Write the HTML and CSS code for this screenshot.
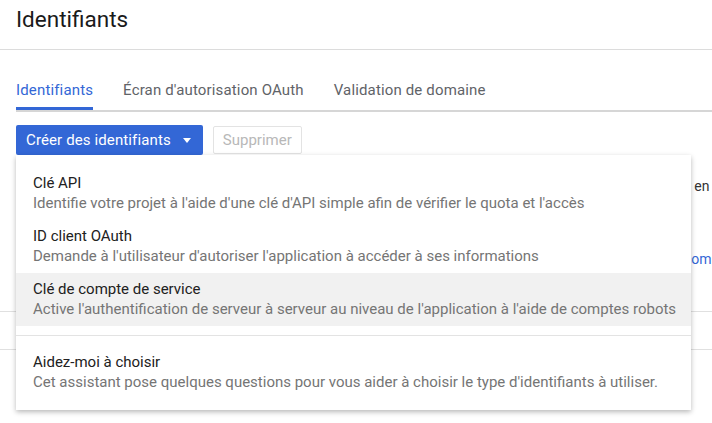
FILE: index.html
```html
<!DOCTYPE html>
<html lang="fr">
<head>
<meta charset="utf-8">
<title>Identifiants</title>
<link rel="stylesheet" href="styles.css">
</head>
<body>
<div class="page">
  <header class="header">
    <h1 class="title">Identifiants</h1>
  </header>
  <nav class="tabs">
    <div class="tab tab-active">Identifiants</div>
    <div class="tab">Écran d'autorisation OAuth</div>
    <div class="tab">Validation de domaine</div>
  </nav>
  <div class="actions">
    <div class="create-wrap">
      <button class="btn-primary">Créer des identifiants <span class="caret"></span></button>
      <div class="menu">
        <div class="item">
          <div class="item-title">Clé API</div>
          <div class="item-desc">Identifie votre projet à l'aide d'une clé d'API simple afin de vérifier le quota et l'accès</div>
        </div>
        <div class="item">
          <div class="item-title">ID client OAuth</div>
          <div class="item-desc">Demande à l'utilisateur d'autoriser l'application à accéder à ses informations</div>
        </div>
        <div class="item item-hover">
          <div class="item-title">Clé de compte de service</div>
          <div class="item-desc">Active l'authentification de serveur à serveur au niveau de l'application à l'aide de comptes robots</div>
        </div>
        <div class="divider"></div>
        <div class="item">
          <div class="item-title">Aidez-moi à choisir</div>
          <div class="item-desc">Cet assistant pose quelques questions pour vous aider à choisir le type d'identifiants à utiliser.</div>
        </div>
      </div>
    </div>
    <button class="btn-disabled">Supprimer</button>
  </div>
  <div class="content">
    <p class="intro">r en</p>
    <a class="link">com</a>
    <div class="table-row"></div>
  </div>
</div>
</body>
</html>
```
FILE: styles.css
```css
* { box-sizing: border-box; }
html, body { margin: 0; padding: 0; background: #fff; }
body { font-family: Roboto, "Noto Sans", Arial, sans-serif; color: #212121; }
.page { width: 712px; height: 423px; overflow: hidden; position: relative; }
.header { padding: 3px 16px 14px; border-bottom: 1px solid #dcdcdc; }
.title { margin: 0; font-size: 22.5px; line-height: 32px; font-weight: 400; color: #1a1a1a; }
.tabs { display: flex; margin: 30px 0 0 16px; border-bottom: 2px solid #d6d6d6; }
.tab { font-size: 15px; letter-spacing: 0.15px; line-height: 20px; padding-bottom: 7px; border-bottom: 3px solid transparent; margin-right: 30px; color: #5f6368; }
.tab-active { color: #3367d6; border-bottom-color: #3367d6; }
.actions { display: flex; align-items: center; margin: 13px 0 0 16px; }
.create-wrap { position: relative; }
.btn-primary { display: flex; align-items: center; height: 30px; padding: 0 12px 0 10px; border: 0; border-radius: 2px; background: #3367d6; color: #fff; font: 400 15px/30px Roboto, Arial, sans-serif; letter-spacing: 0.12px; }
.caret { width: 0; height: 0; border-left: 4px solid transparent; border-right: 4px solid transparent; border-top: 5px solid #fff; margin-left: 12px; margin-top: 1px; }
.btn-disabled { height: 28px; margin-left: 10px; padding: 0 9px; border: 1px solid #e3e3e3; border-radius: 2px; background: #fff; color: #b8b8b8; font: 400 15px/26px Roboto, Arial, sans-serif; }
.menu { position: absolute; top: 30px; left: 0; width: 675px; padding: 12px 0 11px; background: #fff; box-shadow: 0 2px 5px rgba(0,0,0,0.28); z-index: 5; }
.item { padding: 6px 17px 6px; white-space: nowrap; }
.item-hover { background: #f1f1f1; }
.item-title { font-size: 15px; line-height: 20px; color: #212121; }
.item-desc { font-size: 15px; line-height: 21px; color: #757575; }
.divider { height: 1px; background: #e3e3e3; margin: 9px 0 10px; }
.content { position: relative; }
.intro { margin: 21px 0 0 686px; font-size: 14px; line-height: 20px; white-space: nowrap; color: #333; }
.link { display: block; margin: 53px 0 0 684px; font-size: 14px; line-height: 20px; white-space: nowrap; color: #3367d6; }
.table-row { margin-top: 42px; height: 39px; border-top: 1px solid #e0e0e0; border-bottom: 1px solid #e0e0e0; }
```
